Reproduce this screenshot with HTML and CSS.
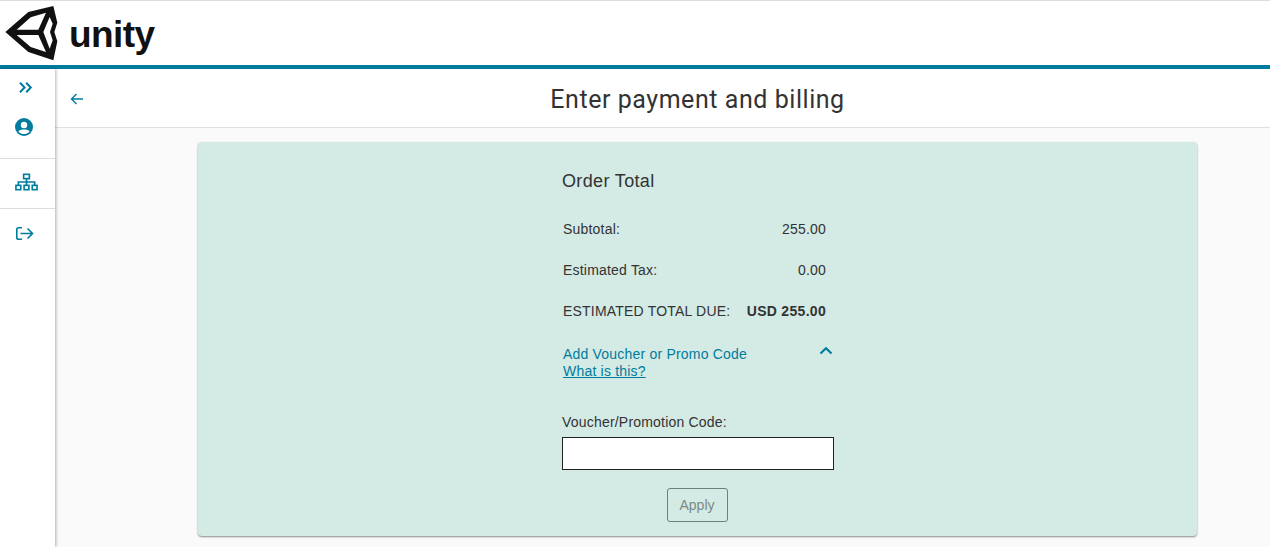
FILE: index.html
```html
<!DOCTYPE html>
<html lang="en">
<head>
    <meta charset="UTF-8">
    <title>Enter payment and billing</title>
    <link rel="stylesheet" href="styles.css">
</head>
<body>
    <header class="topbar">
        <svg class="logo-mark" viewBox="0 0 192 186" width="64" height="62">
            <path d="M16 90 L85 30 L160 12 L172 62 L163 90 L172 118 L160 175 L85 150 Z" fill="#111"/>
            <path d="M50 83 L92 46 L138 32 L115 83 Z M50 99 L115 99 L138 150 L92 135 Z M130 90 L149 45 L158 65 L150 90 L158 115 L149 140 Z" fill="#fff"/>
        </svg>
        <span class="logo-text">unity</span>
    </header>
    <div class="layout">
        <nav class="sidebar">
            <div class="nav-group first">
                <svg class="nav-icon expand" viewBox="0 0 14 11" width="14" height="11">
                    <path d="M1 0.8 L5.6 5.5 L1 10.2 M7.2 0.8 L11.8 5.5 L7.2 10.2" fill="none" stroke="#007c9e" stroke-width="2"/>
                </svg>
                <svg class="nav-icon user" viewBox="0 0 18 18" width="18" height="18">
                    <circle cx="9" cy="9" r="9" fill="#007c9e"/>
                    <circle cx="9" cy="7" r="3.2" fill="#fff"/>
                    <path d="M3.4 13.4 C5 11 13 11 14.6 13.4 C13 15.2 11 16 9 16 C7 16 5 15.2 3.4 13.4 Z" fill="#fff"/>
                </svg>
            </div>
            <div class="nav-group second">
                <svg class="nav-icon org" viewBox="0 0 24 18" width="23" height="18">
                    <g fill="none" stroke="#007c9e" stroke-width="1.7">
                        <rect x="9" y="1" width="6" height="4.5"/>
                        <rect x="1" y="12.5" width="5" height="4.5"/>
                        <rect x="9.5" y="12.5" width="5" height="4.5"/>
                        <rect x="18" y="12.5" width="5" height="4.5"/>
                        <path d="M12 5.5 V12.5 M3.5 12.5 V9 H20.5 V12.5"/>
                    </g>
                </svg>
            </div>
            <div class="nav-group third">
                <svg class="nav-icon exit" viewBox="0 0 18 13" width="18" height="13">
                    <g fill="none" stroke="#007c9e" stroke-width="1.6">
                        <path d="M6 0.8 H2.6 Q0.8 0.8 0.8 2.6 V10.4 Q0.8 12.2 2.6 12.2 H6"/>
                        <path d="M4.5 6.5 H16.5 M11.5 1.5 L16.5 6.5 L11.5 11.5"/>
                    </g>
                </svg>
            </div>
        </nav>
        <main class="content">
            <div class="page-head">
                <svg class="back" viewBox="0 0 14 12" width="14" height="12">
                    <path d="M13 6 H1.5 M6.5 1 L1.5 6 L6.5 11" fill="none" stroke="#007c9e" stroke-width="1.4"/>
                </svg>
                <h1>Enter payment and billing</h1>
            </div>
            <section class="card">
                <div class="order">
                    <h2>Order Total</h2>
                    <div class="row"><span>Subtotal:</span><span>255.00</span></div>
                    <div class="row"><span>Estimated Tax:</span><span>0.00</span></div>
                    <div class="row total"><span>ESTIMATED TOTAL DUE:</span><strong>USD 255.00</strong></div>
                    <div class="voucher-toggle">
                        <div>
                            <div class="voucher-title">Add Voucher or Promo Code</div>
                            <a class="voucher-help" href="#">What is this?</a>
                        </div>
                        <svg class="chevron" viewBox="0 0 14 9" width="14" height="9">
                            <path d="M1.5 7.5 L7 2.2 L12.5 7.5" fill="none" stroke="#007c9e" stroke-width="2.2"/>
                        </svg>
                    </div>
                    <label class="code-label" for="code">Voucher/Promotion Code:</label>
                    <input class="code-input" id="code" type="text">
                    <button class="apply" disabled>Apply</button>
                </div>
            </section>
        </main>
    </div>
</body>
</html>
```
FILE: styles.css
```css
html, body {
    height: 100%;
}
body {
    margin: 0;
    height: 547px;
    overflow: hidden;
    font-family: 'Liberation Sans', Arial, sans-serif;
    background-color: #fafafa;
    color: #333;
    display: flex;
    flex-direction: column;
}
.topbar {
    height: 65px;
    box-sizing: border-box;
    background-color: white;
    border-top: 1px solid #ddd;
    display: flex;
    align-items: center;
    flex-shrink: 0;
}
.logo-text {
    font-size: 37px;
    font-weight: bold;
    color: #111;
    margin-left: 5px;
    letter-spacing: -0.6px;
    line-height: 1;
    margin-top: 2px;
}
.layout {
    flex: 1;
    display: flex;
    border-top: 4px solid #007c9e;
    min-height: 0;
}
.sidebar {
    width: 55px;
    flex-shrink: 0;
    background-color: white;
    box-shadow: 1px 0 3px rgba(0, 0, 0, 0.3);
    z-index: 1;
}
.nav-group {
    display: flex;
    flex-direction: column;
    align-items: flex-start;
    border-bottom: 1px solid #ddd;
}
.nav-group.first {
    padding: 13px 0 22px;
}
.nav-group.second {
    padding: 14px 0 17px;
}
.nav-group.third {
    border-bottom: 0;
    padding: 18px 0;
}
.nav-icon {
    display: block;
}
.nav-icon.expand {
    margin: 0 0 25px 19px;
}
.nav-icon.user {
    margin-left: 15px;
}
.nav-icon.org {
    margin-left: 15px;
}
.nav-icon.exit {
    margin-left: 16px;
}
.content {
    flex: 1;
    min-width: 0;
}
.page-head {
    height: 59px;
    box-sizing: border-box;
    background-color: white;
    border-bottom: 1px solid #e0e0e0;
    display: flex;
    align-items: center;
    position: relative;
    padding: 2px 0 0 70px;
}
.back {
    position: absolute;
    left: 15px;
    top: 24px;
}
h1 {
    flex: 1;
    margin: 0;
    text-align: center;
    font-size: 25px;
    font-weight: normal;
    font-family: Roboto, Arial, sans-serif;
    color: #333;
    letter-spacing: 0.55px;
}
.card {
    width: 999px;
    height: 394px;
    box-sizing: border-box;
    margin: 14px 0 0 143px;
    background-color: #d4eae4;
    border-radius: 4px;
    box-shadow: 0 1px 2px rgba(0, 0, 0, 0.45);
    padding-top: 28px;
}
.order {
    width: 272px;
    margin-left: 364px;
    font-size: 14px;
    display: flex;
    flex-direction: column;
}
h2 {
    margin: 0 0 28px;
    font-size: 18px;
    line-height: 22px;
    font-weight: normal;
    color: #333;
    letter-spacing: 0.35px;
}
.row {
    display: flex;
    justify-content: space-between;
    padding: 0 8px 0 1px;
    line-height: 18px;
    margin-bottom: 23px;
    letter-spacing: 0.2px;
}
.row strong {
    letter-spacing: 0.3px;
}
.total {
    margin-bottom: 26px;
}
.voucher-toggle {
    display: flex;
    justify-content: space-between;
    align-items: flex-start;
    padding-left: 1px;
    line-height: 17px;
    color: #007c9e;
    letter-spacing: 0.2px;
}
.voucher-help {
    color: #007c9e;
}
.chevron {
    margin: 0 1px 0 0;
}
.code-label {
    margin-top: 33px;
    line-height: 18px;
    letter-spacing: 0.2px;
}
.code-input {
    margin-top: 6px;
    height: 33px;
    box-sizing: border-box;
    border: 1px solid #222;
    border-radius: 0;
    background-color: white;
    width: 100%;
}
.apply {
    align-self: center;
    margin: 18px 2px 0 0;
    width: 61px;
    height: 34px;
    background-color: transparent;
    border: 1px solid #6e7f7c;
    border-radius: 3px;
    color: #7c8a87;
    font-family: inherit;
    font-size: 14px;
}
```
